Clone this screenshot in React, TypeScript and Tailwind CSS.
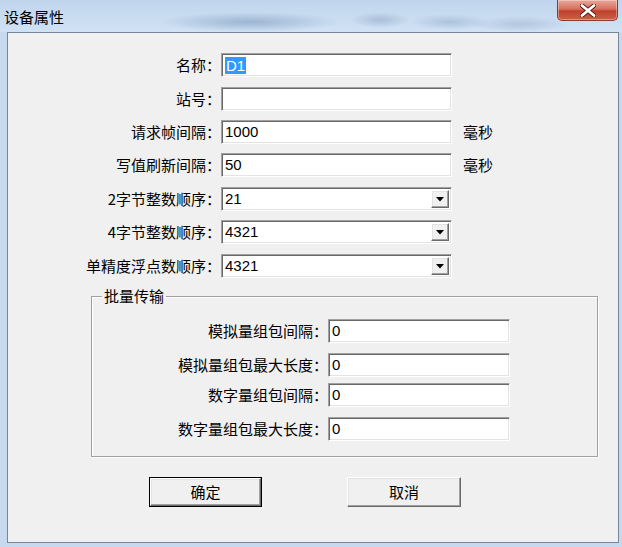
import React from 'react';

const cjk = "font-['Noto_Sans_CJK_SC','Noto_Sans',sans-serif]";
const latin = "font-['Liberation_Sans',Arial,sans-serif]";

// classic sunken 3D border used by edit and combo boxes
const sunken =
  'border border-t-[#a0a0a0] border-l-[#a0a0a0] border-r-white border-b-white shadow-[inset_1px_1px_0_#696969,inset_-1px_-1px_0_#e3e3e3] bg-white';

const raised =
  'border border-t-white border-l-white border-r-[#696969] border-b-[#696969] shadow-[inset_-1px_-1px_0_#a0a0a0,inset_1px_1px_0_#e3e3e3] bg-[#f0f0f0]';

const Field: React.FC<{ value: string; w: string; selected?: boolean }> = ({ value, w, selected }) => (
  <div className={`${sunken} ${w} h-[24px] flex items-center pl-[3px] text-[15px] ${latin} text-black`}>
    {selected ? <span className="bg-[#3399ff] text-white px-[1px] leading-[17px]">{value}</span> : value}
  </div>
);

const Combo: React.FC<{ value: string }> = ({ value }) => (
  <div className={`${sunken} w-[231px] h-[24px] flex items-stretch p-[2px] text-[15px] ${latin} text-black`}>
    <div className="flex-1 flex items-center pl-[1px]">{value}</div>
    <div className={`${raised} w-[18px] flex items-center justify-center`}>
      <svg width="8" height="5" viewBox="0 0 8 5">
        <path d="M0 0h8L4 4.5z" fill="#000" />
      </svg>
    </div>
  </div>
);

const mainRows: { label: string; value: string; kind: 'edit' | 'combo'; unit?: string; selected?: boolean; mt: string }[] = [
  { label: '名称：', value: 'D1', kind: 'edit', selected: true, mt: 'mt-0' },
  { label: '站号：', value: '', kind: 'edit', mt: 'mt-[10px]' },
  { label: '请求帧间隔：', value: '1000', kind: 'edit', unit: '毫秒', mt: 'mt-[9px]' },
  { label: '写值刷新间隔：', value: '50', kind: 'edit', unit: '毫秒', mt: 'mt-[9px]' },
  { label: '2字节整数顺序：', value: '21', kind: 'combo', mt: 'mt-[10px]' },
  { label: '4字节整数顺序：', value: '4321', kind: 'combo', mt: 'mt-[9px]' },
  { label: '单精度浮点数顺序：', value: '4321', kind: 'combo', mt: 'mt-[10px]' },
];

const batchRows = [
  { label: '模拟量组包间隔：', mt: 'mt-0' },
  { label: '模拟量组包最大长度：', mt: 'mt-[10px]' },
  { label: '数字量组包间隔：', mt: 'mt-[6px]' },
  { label: '数字量组包最大长度：', mt: 'mt-[10px]' },
];

export default function App() {
  return (
    <div className={`w-[622px] h-[547px] flex flex-col overflow-hidden bg-[#c6d9ee] ${cjk}`}>
      {/* title bar */}
      <div className="h-[32px] shrink-0 flex items-start bg-[radial-gradient(ellipse_90px_10px_at_250px_22px,#9db5d2,transparent),radial-gradient(ellipse_30px_8px_at_380px_20px,#a9bfd9,transparent),radial-gradient(ellipse_40px_8px_at_450px_22px,#adc2db,transparent),radial-gradient(ellipse_50px_8px_at_520px_24px,#b2c6de,transparent),linear-gradient(#c0d5ec,#d0e2f4)]">
        <div className="pl-[4px] pt-[7px] text-[15px] leading-[20px] text-black">设备属性</div>
        <div className="ml-auto mr-[4px] w-[61px] h-[21px] rounded-b-[5px] border border-t-0 border-[#8b3a30] bg-[linear-gradient(#e9a89c,#d6705e_45%,#c0412c_55%,#c9604c)] flex items-center justify-center shadow-[inset_0_0_0_1px_rgba(255,255,255,0.35)]">
          <svg width="16" height="13" viewBox="0 0 16 13">
            <path d="M2 1.5L14 11.5M14 1.5L2 11.5" stroke="#5a1a12" strokeWidth="4.6" strokeLinecap="round" />
            <path d="M2 1.5L14 11.5M14 1.5L2 11.5" stroke="#fff" strokeWidth="2.8" strokeLinecap="round" />
          </svg>
        </div>
      </div>

      {/* client area */}
      <div className="flex-1 ml-[7px] mr-[3px] mb-[4px] border border-[#76879c] bg-[#f0f0f0] pt-[20px] flex flex-col text-[15px] text-black">
        {mainRows.map(r => (
          <div key={r.label} className={`flex items-center ${r.mt}`}>
            <div className="w-[213px] text-right whitespace-nowrap leading-[20px]">{r.label}</div>
            {r.kind === 'edit' ? <Field value={r.value} w="w-[231px]" selected={r.selected} /> : <Combo value={r.value} />}
            {r.unit && <div className="ml-[11px] leading-[20px]">{r.unit}</div>}
          </div>
        ))}

        <fieldset className="ml-[83px] w-[507px] mt-[8px] border border-[#a0a0a0] shadow-[inset_1px_1px_0_#fff,1px_1px_0_#fff] pb-[15px] pt-[13px]">
          <legend className="ml-[10px] px-[2px] leading-[20px]">批量传输</legend>
          {batchRows.map(r => (
            <div key={r.label} className={`flex items-center ${r.mt}`}>
              <div className="w-[236px] text-right whitespace-nowrap leading-[20px]">{r.label}</div>
              <Field value="0" w="w-[182px]" />
            </div>
          ))}
        </fieldset>

        <div className="flex mt-[20px] ml-[141px]">
          <div className="w-[113px] h-[30px] border border-black">
            <div className={`${raised} w-full h-full flex items-center justify-center`}>确定</div>
          </div>
          <div className={`${raised} ml-[85px] w-[114px] h-[30px] flex items-center justify-center`}>取消</div>
        </div>
      </div>
    </div>
  );
}
